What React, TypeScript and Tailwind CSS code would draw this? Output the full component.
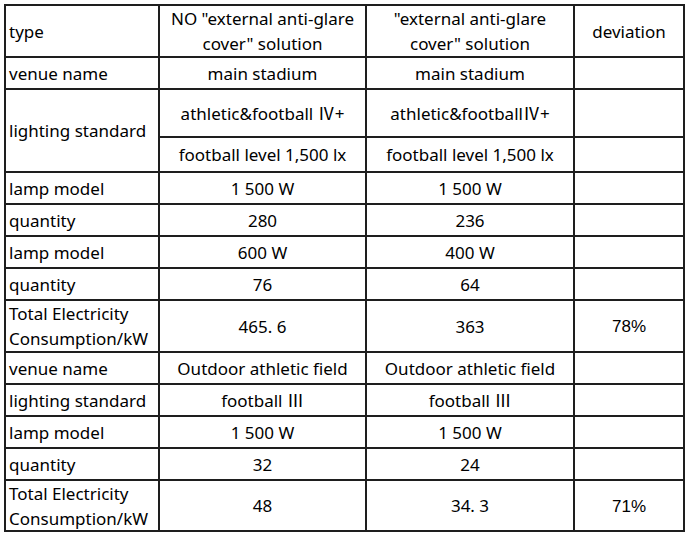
import React from "react";

type Cell = { text: React.ReactNode; left?: boolean; span?: boolean; arial?: boolean };

const Roman = ({ children }: { children: string }) => (
  <span className="font-['Noto_Sans_CJK_SC',sans-serif]">{children}</span>
);

const rows: Cell[][] = [
  [
    { text: "type", left: true },
    { text: <>NO "external anti-glare<br />cover" solution</> },
    { text: <>"external anti-glare<br />cover" solution</> },
    { text: "deviation" },
  ],
  [{ text: "venue name", left: true }, { text: "main stadium" }, { text: "main stadium" }, { text: "" }],
  [
    { text: "lighting standard", left: true, span: true },
    { text: <>athletic&football <Roman>Ⅳ</Roman>+</> },
    { text: <>athletic&football<Roman>Ⅳ</Roman>+</> },
    { text: "" },
  ],
  [{ text: "football level 1,500 lx" }, { text: "football level 1,500 lx" }, { text: "" }],
  [{ text: "lamp model", left: true }, { text: "1 500 W" }, { text: "1 500 W" }, { text: "" }],
  [{ text: "quantity", left: true }, { text: "280" }, { text: "236" }, { text: "" }],
  [{ text: "lamp model", left: true }, { text: "600 W" }, { text: "400 W" }, { text: "" }],
  [{ text: "quantity", left: true }, { text: "76" }, { text: "64" }, { text: "" }],
  [
    { text: <>Total Electricity<br />Consumption/kW</>, left: true },
    { text: "465. 6" },
    { text: "363" },
    { text: "78%", arial: true },
  ],
  [{ text: "venue name", left: true }, { text: "Outdoor athletic field" }, { text: "Outdoor athletic field" }, { text: "" }],
  [{ text: "lighting standard", left: true }, { text: <>football <Roman>Ⅲ</Roman></> }, { text: <>football <Roman>Ⅲ</Roman></> }, { text: "" }],
  [{ text: "lamp model", left: true }, { text: "1 500 W" }, { text: "1 500 W" }, { text: "" }],
  [{ text: "quantity", left: true }, { text: "32" }, { text: "24" }, { text: "" }],
  [
    { text: <>Total Electricity<br />Consumption/kW</>, left: true },
    { text: "48" },
    { text: "34. 3" },
    { text: "71%", arial: true },
  ],
];

export default function App() {
  return (
    <div className="w-[689px] h-[537px] bg-white pl-[4px] pt-[4px] text-black text-[17px] leading-[25px] font-['Noto_Sans','Noto_Sans_CJK_SC',sans-serif]">
      <div className="inline-grid grid-cols-[152px_205px_206px_108px] grid-rows-[50px_30px_46px_33px_30px_30px_30px_30px_50px_30px_30px_30px_30px_49px] gap-[2px] p-[2px] bg-[#1e1e1e]">
        {rows.map((row, r) =>
          row.map((c, i) => (
            <div
              key={`${r}-${i}`}
              className={`bg-white flex items-center whitespace-nowrap ${
                c.left ? "justify-start pl-[3px]" : "justify-center text-center"
              } ${c.span ? "row-span-2" : ""} ${
                c.arial ? "font-['Liberation_Sans',Arial,sans-serif] pt-[1px]" : ""
              }`}
            >
              <span>{c.text}</span>
            </div>
          ))
        )}
      </div>
    </div>
  );
}
